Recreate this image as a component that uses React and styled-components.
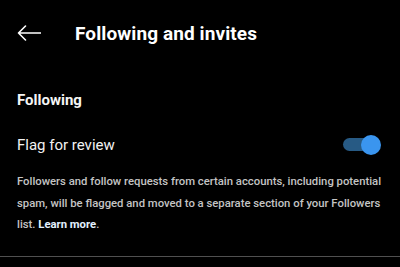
import React from "react";
import styled, { createGlobalStyle } from "styled-components";

const Global = createGlobalStyle`
  html, body { margin: 0; padding: 0; background: #000; }
  body { font-family: Roboto, "Noto Sans", sans-serif; color: #f5f5f5; }
  #root { width: 400px; height: 267px; overflow: hidden; background: #000; }
`;

const Screen = styled.div`
  display: flex;
  flex-direction: column;
  width: 400px;
  height: 267px;
  background: #000;
`;

const Header = styled.header`
  display: flex;
  align-items: center;
  height: 66px;
  padding-left: 17px;
  gap: 34px;
`;

const BackButton = styled.button`
  display: flex;
  align-items: center;
  justify-content: center;
  padding: 0;
  border: 0;
  background: none;
  width: 24px;
  height: 24px;
  color: #fff;
`;

const Title = styled.h1`
  margin: 0;
  font-size: 19px;
  font-weight: 700;
  color: #fff;
  letter-spacing: 0.1px;
`;

const Section = styled.section`
  display: flex;
  flex-direction: column;
  padding: 0 10px 0 17px;
`;

const SectionTitle = styled.h2`
  margin: 24px 0 0;
  font-size: 15px;
  line-height: 20px;
  font-weight: 700;
  color: #f5f5f5;
`;

const Row = styled.div`
  display: flex;
  align-items: center;
  justify-content: space-between;
  height: 28px;
  margin-top: 21px;
`;

const RowLabel = styled.span`
  font-size: 15px;
  font-weight: 400;
  color: #f2f2f2;
`;

const Toggle = styled.div`
  position: relative;
  width: 38px;
  height: 20px;
  margin-right: 9px;
`;

const Track = styled.div`
  position: absolute;
  left: 0;
  top: 3px;
  width: 34px;
  height: 13px;
  border-radius: 7px;
  background: ${(p) => (p.$on ? "#275a84" : "#555")};
`;

const Knob = styled.div`
  position: absolute;
  top: 0;
  left: ${(p) => (p.$on ? "18px" : "0")};
  width: 20px;
  height: 20px;
  border-radius: 50%;
  background: ${(p) => (p.$on ? "#3a95ef" : "#ddd")};
`;

const Description = styled.p`
  margin: 12px 0 0;
  font-size: 11.3px;
  line-height: 21.5px;
  font-weight: 500;
  color: #c4c4c4;
`;

const Link = styled.a`
  color: #e3f1ff;
  font-weight: 700;
  text-decoration: none;
`;

const Divider = styled.hr`
  margin: 20px 0 0;
  border: 0;
  height: 1px;
  background: #505050;
`;

export default function App() {
  return (
    <>
      <Global />
      <Screen>
        <Header>
          <BackButton aria-label="Back">
            <svg width="24" height="16" viewBox="0 0 24 16" fill="none">
              <path
                d="M23.5 8H1.5M8.5 1L1.5 8L8.5 15"
                stroke="#fff"
                strokeWidth="1.6"
                strokeLinecap="round"
                strokeLinejoin="round"
              />
            </svg>
          </BackButton>
          <Title>Following and invites</Title>
        </Header>
        <Section>
          <SectionTitle>Following</SectionTitle>
          <Row>
            <RowLabel>Flag for review</RowLabel>
            <Toggle>
              <Track $on />
              <Knob $on />
            </Toggle>
          </Row>
          <Description>
            Followers and follow requests from certain accounts, including potential
            spam, will be flagged and moved to a separate section of your Followers
            list. <Link href="#">Learn more</Link>.
          </Description>
        </Section>
        <Divider />
      </Screen>
    </>
  );
}
